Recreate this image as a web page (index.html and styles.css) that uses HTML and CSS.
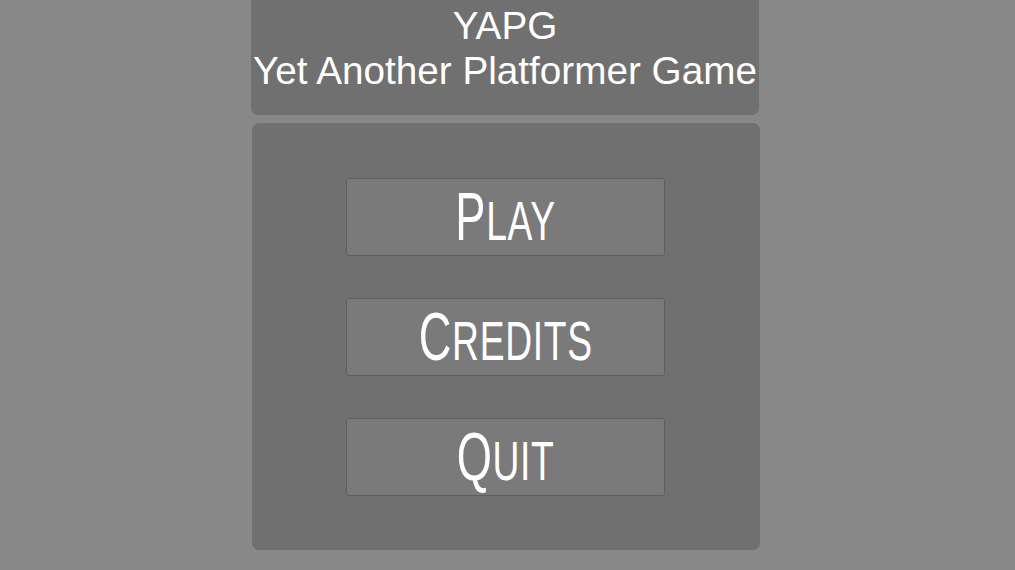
FILE: index.html
```html
<!DOCTYPE html>
<html>
<head>
<meta charset="utf-8">
<link rel="stylesheet" href="styles.css">
</head>
<body>
<div class="menu">
  <header class="title-panel">
    <div class="title">YAPG</div>
    <div class="title">Yet Another Platformer Game</div>
  </header>
  <main class="button-panel">
    <button class="btn"><span class="label"><span class="big">P</span>LAY</span></button>
    <button class="btn"><span class="label"><span class="big">C</span>REDITS</span></button>
    <button class="btn"><span class="label"><span class="big">Q</span>UIT</span></button>
  </main>
</div>
</body>
</html>
```
FILE: styles.css
```css
html, body {
  margin: 0;
  padding: 0;
  background: #888888;
  width: 1015px;
  height: 570px;
  overflow: hidden;
}
.menu {
  margin-left: 251px;
  width: 509px;
  display: flex;
  flex-direction: column;
  gap: 8px;
  font-family: "Liberation Sans", Arial, sans-serif;
  color: #ffffff;
}
.title-panel {
  height: 115px;
  box-sizing: border-box;
  padding-top: 3px;
  background: #707070;
  border-radius: 0 0 7px 7px;
  width: 508px;
  text-align: center;
}
.title {
  font-size: 38.7px;
  line-height: 45px;
}
.button-panel {
  margin-left: 1px;
  width: 508px;
  height: 427px;
  box-sizing: border-box;
  background: #707070;
  border-radius: 7px;
  padding-top: 55px;
  display: flex;
  flex-direction: column;
  align-items: center;
  gap: 42px;
}
.btn {
  margin-left: -1px;
  width: 319px;
  height: 78px;
  box-sizing: border-box;
  background: #7a7a7a;
  border: 1px solid #5e5e5e;
  border-radius: 3px;
  padding: 0;
  display: flex;
  align-items: center;
  justify-content: center;
  color: #ffffff;
  font-family: "Liberation Sans", Arial, sans-serif;
}
.label {
  display: inline-block;
  font-size: 56px;
  line-height: 60px;
  transform: scaleX(0.665);
  margin-top: 2px;
  white-space: nowrap;
  letter-spacing: 1px;
}
.big {
  font-size: 68px;
}
```
